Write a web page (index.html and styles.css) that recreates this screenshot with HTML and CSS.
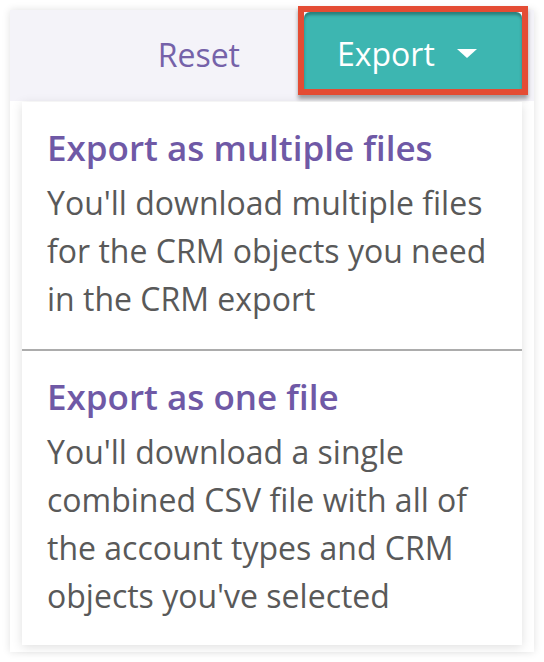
FILE: index.html
```html
<!DOCTYPE html>
<html>
<head>
<meta charset="utf-8">
<link rel="stylesheet" href="styles.css">
</head>
<body>
<div class="panel">
  <div class="header">
    <button class="reset">Reset</button>
    <span class="highlight">
      <button class="export">Export <svg class="caret" width="20" height="9" viewBox="0 0 20 9"><path d="M0 0H20L10 9Z" fill="#fff"/></svg></button>
    </span>
  </div>
  <div class="menu">
    <div class="option">
      <div class="opt-title">Export as multiple files</div>
      <div class="opt-desc">You'll download multiple files for the CRM objects you need in the CRM export</div>
    </div>
    <div class="option second">
      <div class="opt-title">Export as one file</div>
      <div class="opt-desc">You'll download a single combined CSV file with all of the account types and CRM objects you've selected</div>
    </div>
  </div>
</div>
</body>
</html>
```
FILE: styles.css
```css
html, body {
  margin: 0;
  padding: 0;
  background: #ffffff;
}
body {
  font-family: "Open Sans", "Noto Sans", sans-serif;
  padding: 10px;
}
.panel {
  width: 524px;
  height: 642px;
  background: #ffffff;
  box-shadow: 0 0 8px rgba(0, 0, 0, 0.12);
  display: flex;
  flex-direction: column;
}
.header {
  height: 91px;
  background: #f4f3f9;
  display: flex;
  align-items: flex-start;
  justify-content: flex-end;
  padding-right: 6px;
}
.reset {
  font-family: inherit;
  background: none;
  border: none;
  color: #7562a9;
  font-size: 32px;
  padding: 0;
  margin: 23px 58px 0 0;
  line-height: 44px;
}
.highlight {
  margin-top: -4px;
  border: 6px solid #e44c34;
  box-shadow: 0 4px 4px rgba(0, 0, 0, 0.35);
  display: flex;
}
.export {
  width: 218px;
  height: 77px;
  background: #3db6b1;
  border: none;
  border-radius: 6px 6px 0 0;
  box-shadow: inset 0 3px 3px rgba(0, 0, 0, 0.3);
  color: #ffffff;
  font-family: inherit;
  font-size: 32px;
  display: flex;
  align-items: center;
  padding: 5px 0 0 33px;
  gap: 22px;
}
.caret {
  display: block;
}
.menu {
  margin: 1px 12px 0 12px;
  height: 543px;
  background: #ffffff;
  box-shadow: 0 2px 10px rgba(0, 0, 0, 0.13);
}
.option {
  padding: 22px 8px 26px 25px;
}
.option.second {
  border-top: 2px solid #acacac;
}
.opt-title {
  color: #6f59a6;
  font-size: 35px;
  font-weight: 600;
  line-height: 48px;
}
.opt-desc {
  color: #595959;
  font-size: 32px;
  line-height: 48px;
  margin-top: 7px;
}
```
